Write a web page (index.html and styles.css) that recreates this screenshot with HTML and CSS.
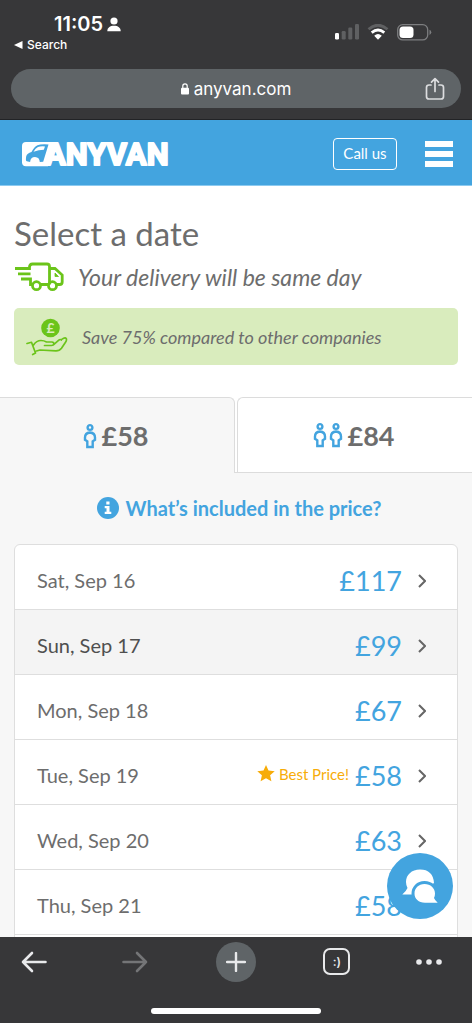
FILE: index.html
```html
<!DOCTYPE html>
<html lang="en">
<head>
<meta charset="utf-8">
<meta name="viewport" content="width=device-width, initial-scale=1">
<title>AnyVan - Select a date</title>
<link rel="stylesheet" href="styles.css">
</head>
<body>
<div class="browser-top">
  <div class="status">
    <div class="status-left">
      <div class="clock">11:05
        <svg width="14" height="15" viewBox="0 0 14 15" fill="currentColor" aria-hidden="true"><circle cx="7" cy="4" r="3.6"/><path d="M.3 14.2C.3 10.800 3 8.800 7 8.800s6.700 2 6.700 5.400z"/></svg>
      </div>
      <a class="back-app" href="#"><svg width="9" height="8" viewBox="0 0 9 8" fill="currentColor" aria-hidden="true"><path d="M0 4 8.500 0v8z"/></svg>Search</a>
    </div>
    <div class="status-right">
      <svg width="24" height="16" viewBox="0 0 24 16" aria-label="Signal"><rect y="9" width="4" height="6.500" rx="1.200" fill="#fff"/><g fill="#5f6062"><rect x="6.700" y="7" width="4" height="8.500" rx="1.200"/><rect x="13.300" y="3.500" width="4" height="12" rx="1.200"/><rect x="20" y="0" width="4" height="15.500" rx="1.200"/></g></svg>
      <svg width="22" height="16" viewBox="0 0 22 16" fill="none" aria-label="Wi-Fi"><path d="M1.500 5.200Q11-2.800 20.500 5.200" stroke="#5f6062" stroke-width="2.800"/><path d="M4.700 8.600q6.300-5.200 12.600 0" stroke="#fff" stroke-width="2.800"/><path d="M7.200 11.700q3.800-3.200 7.600 0L11 15.700z" fill="#fff"/></svg>
      <svg width="35" height="17" viewBox="0 0 35 17" aria-label="Battery"><rect x=".7" y=".7" width="30" height="15.200" rx="5" fill="none" stroke="#7d7e80" stroke-width="1.300"/><rect x="2.500" y="2.500" width="14" height="11.600" rx="3.500" fill="#fff"/><path d="M32.500 5.700v5.200q1.800-.7 1.800-2.600t-1.800-2.600z" fill="#7d7e80"/></svg>
    </div>
  </div>
  <div class="address">
    <span class="url"><svg width="8" height="12" viewBox="0 0 8 12" aria-hidden="true"><rect y="4.800" width="8" height="6.700" rx="1" fill="#fff"/><path d="M1.800 5V3a2.200 2.200 0 0 1 4.400 0v2" fill="none" stroke="#fff" stroke-width="1.200"/></svg>anyvan.com</span>
    <button class="share" aria-label="Share"><svg width="20" height="24" viewBox="0 0 20 24" fill="none" stroke="#dcdddf" stroke-width="1.700" stroke-linecap="round" stroke-linejoin="round"><path d="M6 8H4Q1.500 8 1.500 10.500v9Q1.500 22 4 22h12q2.500 0 2.500-2.500v-9Q18.500 8 16 8h-2M10 14.500V2M6.500 5.200 10 1.700l3.500 3.500"/></svg></button>
  </div>
</div>

<div class="page">
  <header class="site-header">
    <a class="logo" href="#" aria-label="AnyVan">
      <svg width="160" height="34" viewBox="0 0 160 34">
        <path d="M4 5h30L26 29.200H4Q0 29.200 0 25.200V9Q0 5 4 5z" fill="#fff"/>
        <path d="M4 20.700q0-3.500 3.500-5l2-.8q2.500-5 6-6.700 3-1.300 11-.8l-5.300 17.300-3.400.4q-.3-4.800-4.800-5-4.500.1-4.900 5l-3.300-.8q-1.200-.3-.8-3.600z" fill="#43a4df"/>
        <path d="M11.500 14.700q2-3.500 4.500-4.700 2.500-1 7-.6l-1.200 3.300q-5 0-10.300 2z" fill="#fff"/>
        <circle cx="13" cy="25" r="3.400" fill="#fff"/>
        <text class="logo-text" x="23" y="28">ANYVAN</text>
      </svg>
    </a>
    <nav class="header-actions">
      <button class="call">Call us</button>
      <button class="menu" aria-label="Menu"><span></span><span></span><span></span></button>
    </nav>
  </header>

  <section class="intro">
    <h1>Select a date</h1>
    <p class="delivery">
      <svg width="50" height="30" viewBox="0 0 50 30" fill="none" stroke="#6bc41a" stroke-width="2.800" aria-hidden="true"><path d="M1 6.500h14.500V5q0-3 3-3H33q2.500 0 2.500 2.500v18M4 11.800h12.500M7 17h9.500v5.500h2.300M26.500 22.500H34M35.500 6.500H41l7.200 6.500V20q0 2.500-2.500 2.500h-3"/><circle cx="22.500" cy="23.700" r="4"/><circle cx="38.500" cy="23.700" r="4"/><path d="M41 11v3.500h3.500z" fill="#6bc41a" stroke-width=".8"/></svg>
      Your delivery will be same day
    </p>
    <p class="saving">
      <svg width="42" height="40" viewBox="0 0 42 40" fill="none" stroke="#6bc41a" stroke-width="1.700" stroke-linejoin="round" stroke-linecap="round" aria-hidden="true"><circle cx="24.500" cy="11" r="9.300" fill="#6bc41a" stroke="none"/><text class="coin" x="24.500" y="16" text-anchor="middle">£</text><path d="M1 26.500l4.500-1.200L9.500 36l-2.800 1.500M7.500 28q3-4.500 7.500-4.500 3 0 5.500 1.500h5.500q2 .2 1.800 1.900-.2 1.600-2.300 1.600h-7M28 27.300l4.800-4.100q1.600-1.300 2.500-.1M35 22.900l2.300-1.500q2-1.200 2.900.1.800 1.500-.7 3.700l-4 6q-2 2.600-5.500 2.600l-16-.8-3.500 1"/></svg>
      Save 75% compared to other companies
    </p>
  </section>

  <div class="tabs" role="tablist">
    <button class="tab selected" role="tab" aria-selected="true">
      <svg width="14" height="26" viewBox="0 0 14 26" class="person" aria-hidden="true"><circle cx="7" cy="4.500" r="2.400"/><path d="M7 9.500q-5 .5-5 5v2.300l2.300 1.500v5.700h5.400v-5.700l2.300-1.500v-2.300Q12 10 7 9.500z"/></svg>
      £58
    </button>
    <button class="tab" role="tab" aria-selected="false">
      <svg width="14" height="26" viewBox="0 0 14 26" class="person" aria-hidden="true"><circle cx="7" cy="4.500" r="2.400"/><path d="M7 9.500q-5 .5-5 5v2.300l2.300 1.500v5.700h5.400v-5.700l2.300-1.500v-2.300Q12 10 7 9.500z"/></svg>
      <svg width="14" height="26" viewBox="0 0 14 26" class="person" aria-hidden="true"><circle cx="7" cy="4.500" r="2.400"/><path d="M7 9.500q-5 .5-5 5v2.300l2.300 1.500v5.700h5.400v-5.700l2.300-1.500v-2.300Q12 10 7 9.500z"/></svg>
      <span class="amount">£84</span>
    </button>
  </div>

  <section class="dates">
    <a class="included" href="#"><svg width="22" height="22" viewBox="0 0 22 22" aria-hidden="true"><circle cx="11" cy="11" r="11" fill="#43a4df"/><path d="M9.300 4.500h3.200v3H9.300zM7.700 9h4.800v5.800h1.800V17H7.700v-2.200h1.800v-3.600H7.700z" fill="#fff"/></svg>What’s included in the price?</a>
    <ul class="list">
      <li><button class="row"><span class="day">Sat, Sep 16</span><span class="price">£117</span><svg class="chevron" viewBox="0 0 8 14"><path d="m1 1 6 6-6 6"/></svg></button></li>
      <li><button class="row active"><span class="day">Sun, Sep 17</span><span class="price">£99</span><svg class="chevron" viewBox="0 0 8 14"><path d="m1 1 6 6-6 6"/></svg></button></li>
      <li><button class="row"><span class="day">Mon, Sep 18</span><span class="price">£67</span><svg class="chevron" viewBox="0 0 8 14"><path d="m1 1 6 6-6 6"/></svg></button></li>
      <li><button class="row"><span class="day">Tue, Sep 19</span><span class="best"><svg width="18" height="17" viewBox="0 0 18 17" fill="currentColor" aria-hidden="true"><path d="m9 0 2.500 5.600 6.200.6-4.600 4.100 1.300 6L9 13.200l-5.400 3.100 1.300-6L.3 6.200l6.200-.6z"/></svg>Best Price!</span><span class="price">£58</span><svg class="chevron" viewBox="0 0 8 14"><path d="m1 1 6 6-6 6"/></svg></button></li>
      <li><button class="row"><span class="day">Wed, Sep 20</span><span class="price">£63</span><svg class="chevron" viewBox="0 0 8 14"><path d="m1 1 6 6-6 6"/></svg></button></li>
      <li><button class="row"><span class="day">Thu, Sep 21</span><span class="price">£58</span><svg class="chevron" viewBox="0 0 8 14"><path d="m1 1 6 6-6 6"/></svg></button></li>
      <li class="next"></li>
    </ul>
  </section>
  <button class="chat" aria-label="Chat"><svg width="36" height="34" viewBox="0 0 36 34"><path d="M18 .5C9.500.5 4 6 4 13q0 3 1.500 6Q4 22.500.3 25.500H16L32 14Q31 .5 18 .5z" fill="#fff"/><path d="M22.500 15c6 0 10.500 4.200 10.500 9.500q0 2.500-1 4.500 1 2.500 3.700 4.700H23c-6.500 0-10.500-4-10.500-9.200S16.500 15 22.500 15z" fill="#fff" stroke="#43a4df" stroke-width="6" paint-order="stroke"/></svg></button>
</div>

<div class="browser-bottom">
  <nav class="toolbar">
    <button aria-label="Back"><svg width="26" height="22" viewBox="0 0 26 22" fill="none" stroke="#e8e9eb" stroke-width="2.600" stroke-linecap="round" stroke-linejoin="round"><path d="M24.500 11H2M11 2l-9 9 9 9"/></svg></button>
    <button aria-label="Forward"><svg width="26" height="22" viewBox="0 0 26 22" fill="none" stroke="#747577" stroke-width="2.600" stroke-linecap="round" stroke-linejoin="round"><path d="M1.500 11H24M15 2l9 9-9 9"/></svg></button>
    <button aria-label="New tab"><span class="plus"><svg width="20" height="20" viewBox="0 0 20 20" fill="none" stroke="#e8e9eb" stroke-width="2.400" stroke-linecap="round"><path d="M10 1v18M1 10h18"/></svg></span></button>
    <button aria-label="Tabs"><span class="tab-count">:)</span></button>
    <button class="more" aria-label="More"><svg width="26" height="6" viewBox="0 0 26 6" fill="#e8e9eb"><circle cx="3" cy="3" r="2.800"/><circle cx="13" cy="3" r="2.800"/><circle cx="23" cy="3" r="2.800"/></svg></button>
  </nav>
  <div class="home"></div>
</div>
</body>
</html>
```
FILE: styles.css
```css
* { box-sizing: border-box; }
body {
  margin: 0;
  height: 100vh;
  display: flex;
  flex-direction: column;
  font-family: Lato, "Liberation Sans", sans-serif;
  color: #6d6d6d;
  background: #f7f7f7;
}
button { font: inherit; color: inherit; background: none; border: 0; padding: 0; }
a { color: inherit; text-decoration: none; }
svg { display: block; flex: none; }
h1, p, ul { margin: 0; padding: 0; list-style: none; }

.browser-top {
  flex: none;
  background: #373739;
  color: #fff;
  font-family: Inter, Roboto, sans-serif;
  padding: 12px 11px 11px;
  border-bottom: 1px solid #222326;
}
.status { display: flex; justify-content: space-between; height: 57px; }
.clock {
  display: flex;
  align-items: center;
  gap: 4px;
  padding-left: 43px;
  font-size: 20px;
  font-weight: 600;
  line-height: 24px;
}
.back-app {
  display: flex;
  align-items: center;
  gap: 4px;
  padding-left: 3px;
  font-size: 12px;
  font-weight: 500;
  line-height: 18px;
}
.status-right { display: flex; align-items: center; height: 40px; gap: 8px; padding-right: 29px; }
.address {
  display: grid;
  grid-template-columns: 1fr auto 1fr;
  align-items: center;
  height: 39px;
  padding: 0 16px;
  border-radius: 20px;
  background: #5f6467;
}
.url { grid-column: 2; display: flex; align-items: center; gap: 5px; font-size: 17px; }
.share { justify-self: end; }

.page { flex: 1; min-height: 0; overflow: hidden; position: relative; }
.site-header {
  display: flex;
  align-items: center;
  justify-content: space-between;
  height: 66px;
  padding: 2px 19px 0 22px;
  background: #43a4df;
  border-bottom: 1px solid #8ccaf0;
  color: #fff;
}
.logo-text {
  font: 700 31px Roboto, sans-serif;
  fill: #fff;
  stroke: #fff;
  stroke-width: 2px;
  stroke-linejoin: round;
}
.header-actions { display: flex; align-items: center; gap: 28px; }
.call { width: 64px; height: 32px; padding-bottom: 2px; border: 1px solid #fff; border-radius: 4px; font-size: 15px; }
.menu { display: grid; gap: 4px; width: 28px; }
.menu span { height: 6px; background: #fff; }

.intro { padding: 26px 14px 32px; background: #fff; }
h1 { font-size: 33px; font-weight: 400; line-height: 42px; }
.delivery {
  display: flex;
  align-items: center;
  gap: 14px;
  height: 45px;
  font-size: 23px;
  font-style: italic;
}
.saving {
  display: flex;
  align-items: center;
  gap: 14px;
  height: 57px;
  margin-top: 9px;
  padding: 0 12px;
  border-radius: 5px;
  background: #d9ecbd;
  font-size: 18px;
  font-style: italic;
}
.coin { font: bold 14px Lato, sans-serif; fill: #d9ecbd; stroke: none; }

.tabs { display: grid; grid-template-columns: 1fr 1fr; gap: 2px; background: linear-gradient(#fff 75px, #dcdcdc 75px); }
.tab {
  display: flex;
  align-items: center;
  justify-content: center;
  gap: 2px;
  height: 76px;
  padding-right: 3px;
  border: 1px solid #dcdcdc;
  border-right: 0;
  border-radius: 6px 0 0 0;
  background: #fff;
  font-size: 27px;
  font-weight: 700;
}
.tab.selected {
  gap: 5px;
  border-right: 1px solid #dcdcdc;
  border-left: 0;
  border-bottom: 0;
  border-radius: 0 6px 0 0;
  background: #f7f7f7;
}
.amount { padding-left: 3px; }
.person { fill: none; stroke: #43a4df; stroke-width: 2.400; }

.dates { padding: 22px 14px 0; }
.included {
  display: flex;
  align-items: center;
  justify-content: center;
  gap: 7px;
  height: 26px;
  padding-left: 6px;
  font-size: 20px;
  font-weight: 700;
  color: #43a4df;
}
.list { margin-top: 23px; border: 1px solid #dedede; border-radius: 6px; background: #fff; overflow: hidden; }
.list li { border-bottom: 1px solid #dedede; }
.row { display: flex; align-items: center; width: 100%; height: 64px; padding: 8px 31px 0 22px; text-align: left; }
.row.active { background: #f4f4f4; color: #4f4f4f; }
.day { flex: 1; padding-bottom: 2px; font-size: 20px; }
.price { padding-bottom: 2px; font-size: 27px; color: #43a4df; }
.best { display: flex; align-items: center; gap: 4px; margin-right: 6px; padding-bottom: 5px; font-size: 15px; color: #f7ac08; }
.chevron { width: 8px; height: 14px; margin-left: 16px; fill: none; stroke: #666; stroke-width: 2; }
.next { height: 64px; }
.chat {
  position: absolute;
  right: 19px;
  bottom: 18px;
  display: grid;
  place-items: center;
  width: 66px;
  height: 66px;
  border-radius: 50%;
  background: #43a4df;
}

.browser-bottom { flex: none; height: 86px; background: #373739; font-family: Inter, Roboto, sans-serif; }
.toolbar { display: grid; grid-template-columns: repeat(5, 1fr); height: 49px; margin: 0 -16px; }
.toolbar button { display: grid; place-items: center; }
.toolbar .more { padding-right: 18px; }
.plus { display: grid; place-items: center; width: 40px; height: 40px; border-radius: 50%; background: #5f6467; }
.tab-count {
  display: grid;
  place-items: center;
  width: 27px;
  height: 27px;
  border: 2px solid #e8e9eb;
  border-radius: 7px;
  color: #e8e9eb;
  font-size: 12px;
  font-weight: 600;
}
.home { width: 36%; height: 6px; margin: 22px auto 0; border-radius: 3px; background: #fff; }
```
